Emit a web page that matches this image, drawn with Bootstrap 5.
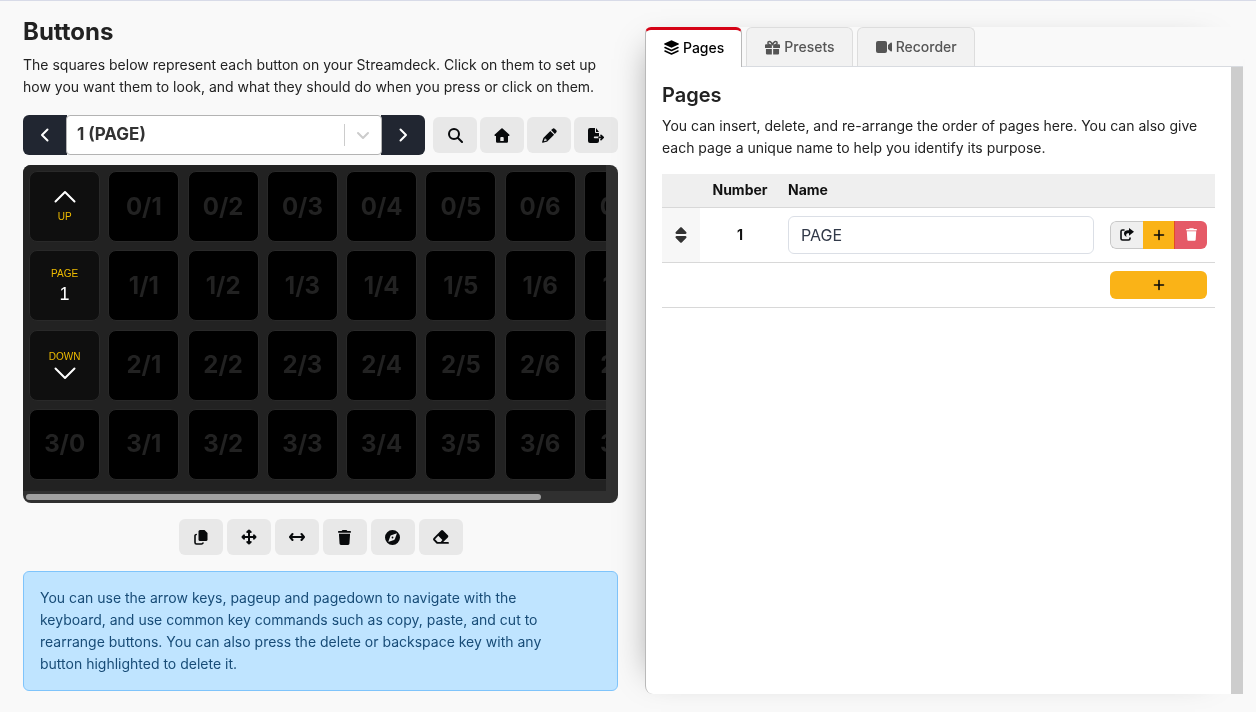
<!DOCTYPE html>
<html lang="en">
<head>
<meta charset="utf-8">
<meta name="viewport" content="width=device-width, initial-scale=1">
<title>Buttons</title>
<link href="https://cdn.jsdelivr.net/npm/bootstrap@5.3.0/dist/css/bootstrap.min.css" rel="stylesheet">
<style>
body { background: #f9f9f9; color: #222; font-family: Inter, "Liberation Sans", sans-serif; font-size: 14px; line-height: 22px; }
main { border-top: 1px solid #d8dbe8; }
p { margin: 0; }
svg { display: block; fill: currentColor; }
.ln { fill: none; stroke: currentColor; stroke-width: 2; stroke-linecap: round; stroke-linejoin: round; }
.ln-thin { stroke-width: 1.6; }
.left-side { padding: 16px 10px 21px 23px; }
.right-side { padding: 26px 13px 18px 17px; }
h1 { font-size: 24px; font-weight: 700; line-height: 30px; margin: 0 0 7px; }
h2 { font-size: 20px; font-weight: 600; line-height: 26px; margin: 0 0 7px; }
.head-tools { margin-top: 17px; }
.pager { width: 402px; height: 40px; }
.btn-page { width: 44px; background: #212631; color: #fff; padding: 0; }
.btn-page:hover { background: #323a49; color: #fff; }
.pick { position: relative; border: 1px solid #b3b3b3; border-radius: 4px; background: #fff; margin: 0 -1px; }
.pick select { appearance: none; border: 0; background: none; width: 100%; height: 100%; padding: 0 50px 2px 10px; font-size: 17px; font-weight: 700; color: #333; }
.pick .deco { position: absolute; top: 0; bottom: 0; right: 0; width: 37px; pointer-events: none; color: #ccc; }
.deco::before { content: ""; position: absolute; left: 0; top: 8px; bottom: 8px; width: 1px; background: #ccc; }
.tool { width: 44px; height: 36px; padding: 0; background: #e8e8e8; color: #080a0c; border: 0; border-radius: 6px; }
.tool:hover { background: #ddd; }
.tools-top { gap: 3px; }
.deck { margin-top: 10px; background: #303030; border-radius: 8px; overflow: hidden; padding: 0 12px 0 0; }
.deck-view { background: #222; overflow: auto; scrollbar-width: none; height: 326px; padding: 2px; }
.deck-view::-webkit-scrollbar { display: none; }
.deck-grid { display: grid; grid-template-columns: repeat(8, 1fr); grid-template-rows: repeat(4, 1fr); width: 634px; height: 317px; place-items: center; }
.key { width: 71px; height: 71px; padding: 0; background: #000; border: 1px solid #292929; border-radius: 8px; color: #222; font-size: 24px; font-weight: 700; line-height: 30px; }
.key-nav { background: #0f0f0f; color: #fff; font: 18px/20px "Liberation Sans", Arial, sans-serif; }
.key-nav span { color: #eebb00; font-size: 10px; line-height: 12px; }
.deck-bar { height: 12px; padding: 3px 0 3px 3px; }
.deck-thumb { width: 515px; height: 6px; border-radius: 3px; background: #a0a0a0; }
.hint { margin-top: 16px; padding: 15px 48px 15px 16px; background: #bfe4ff; border: 1px solid #7fc4fb; border-radius: 6px; color: #184c77; }
.side-panel { box-shadow: -16px 0 32px -21px rgba(0,0,0,.36); border-radius: 8px; }
.tabs { gap: 4px; height: 40px; border-bottom: 1px solid #d8dbe0; }
.tab { height: 39px; padding: 0 17px 0 18px; gap: 4px; display: flex; align-items: center; background: #f2f2f2; border: 1px solid #ddd; border-bottom: 0; border-radius: 6px 6px 0 0; color: #555; font-weight: 500; text-decoration: none; }
.tab.current { height: 40px; margin-bottom: -1px; padding-bottom: 2px; border: 1px solid #b9b9b9; border-top: 3px solid #d50215; border-bottom: 0; background: #fff; color: #000; }
.pane { background: #fff; border-left: 1px solid #b9b9b9; border-radius: 0 0 0 8px; overflow: hidden; }
.pane-body { padding: 15px 16px; min-width: 0; }
.pane-track { width: 12px; background: #cdcdcd; flex: none; }
.pages { width: 100%; margin-top: 15px; color: #111; }
.pages th { font-weight: 700; }
.pages th, .pages td { padding: 8px; }
.pages thead th { background: #efefef; height: 33px; padding: 0 8px; }
.pages tr { border-bottom: 1px solid #d8d8d8; }
.pages .grip { width: 38px; background: #f7f7f7; color: #333; padding: 0; }
.pages .num { width: 80px; text-align: center; }
.pages .acts { width: 113px; }
.pages input { height: 38px; padding: 0 12px; border: 1px solid #dbdfe6; border-radius: 6px; font-size: 16px; color: #323a49; }
.act { height: 28px; padding: 0; flex: 1; color: #080a0c; border: 0; }
.act-share { background: #efefef; border: 1px solid #c8c8c8; border-right: 0; }
.act-add, .act-add:hover { background: #fab317; }
.act-del { background: #e55a67; border-left: 1px solid #e34a28; color: #fff; }
</style>
</head>
<body>
<svg class="d-none" aria-hidden="true">
  <symbol id="i-trash" viewBox="0 0 448 512"><path d="M135.200 17.700L128 32H32C14.300 32 0 46.300 0 64S14.300 96 32 96H416c17.700 0 32-14.300 32-32s-14.300-32-32-32H320l-7.200-14.300C307.400 6.800 296.300 0 284.200 0H163.800c-12.100 0-23.200 6.800-28.600 17.700zM416 128H32L53.200 467c1.600 25.300 22.600 45 47.900 45H346.900c25.300 0 46.300-19.700 47.900-45L416 128z"/></symbol>
  <symbol id="i-plus" viewBox="0 0 16 16"><path class="ln ln-thin" d="M8 3.500v9M3.500 8h9"/></symbol>
</svg>
<main class="row g-0 min-vh-100">
  <section class="col-6 left-side">
    <h1>Buttons</h1>
    <p>The squares below represent each button on your Streamdeck. Click on them to set up how you want them to look, and what they should do when you press or click on them.</p>
    <div class="d-flex justify-content-between align-items-center head-tools">
      <div class="pager d-flex">
        <button class="btn btn-page rounded-end-0 d-flex align-items-center justify-content-center" type="button" aria-label="Previous page"><svg width="16" height="16" viewBox="0 0 16 16"><path class="ln" d="M10.500 2.500L5 8l5.500 5.500"/></svg></button>
        <div class="pick flex-grow-1">
          <select aria-label="Page"><option>1 (PAGE)</option></select>
          <span class="deco d-flex align-items-center justify-content-center"><svg width="14" height="14" viewBox="0 0 14 14"><path class="ln" d="M2 5l5 5 5-5"/></svg></span>
        </div>
        <button class="btn btn-page rounded-start-0 d-flex align-items-center justify-content-center" type="button" aria-label="Next page"><svg width="16" height="16" viewBox="0 0 16 16"><path class="ln" d="M5.500 2.500L11 8l-5.500 5.500"/></svg></button>
      </div>
      <div class="tools-top d-flex">
        <button class="btn tool d-flex align-items-center justify-content-center" type="button" aria-label="Zoom"><svg width="15" height="15" viewBox="0 0 15 15"><circle class="ln" cx="6" cy="6" r="5"/><path class="ln" d="M10 10l4 4"/></svg></button>
        <button class="btn tool d-flex align-items-center justify-content-center" type="button" aria-label="Home"><svg width="16" height="15" viewBox="0 0 16 15"><path fill-rule="evenodd" d="M7.400.400a1 1 0 0 1 1.200 0l6.600 6c.700.700.300 1.600-.500 1.600H14v5.500a1.200 1.200 0 0 1-1.200 1.200H3.200A1.200 1.200 0 0 1 2 13.500V8h-.700C.400 8 .100 7 .800 6.400zM6.300 13h3.400V9.800c0-.500-.400-.900-.900-.900H7.200c-.500 0-.900.400-.900.900z"/></svg></button>
        <button class="btn tool d-flex align-items-center justify-content-center" type="button" aria-label="Edit"><svg width="15" height="15" viewBox="0 0 15 15"><path d="M10.400.900a1.800 1.800 0 0 1 2.500 0l1.200 1.200a1.800 1.800 0 0 1 0 2.500l-1.200 1.300-3.800-3.800z"/><path fill-rule="evenodd" d="M8.300 2.900l3.800 3.800-6.600 6.500c-.300.300-.600.500-1 .600l-3.700 1a.6.600 0 0 1-.700-.700l1.100-3.600c.100-.400.300-.800.600-1.100zM2.800 10.500l-.9 2.700 2.800-.8V11.400H3.600v-.9z"/></svg></button>
        <button class="btn tool d-flex align-items-center justify-content-center" type="button" aria-label="Export page"><svg width="16" height="15" viewBox="0 0 16 15"><path d="M2 0h5v4a1 1 0 0 0 1 1h3v3.600H6.600a.8.800 0 0 0 0 1.600H11V13a2 2 0 0 1-2 2H2a2 2 0 0 1-2-2V2a2 2 0 0 1 2-2zM8 0l3 4H8z"/><path class="ln ln-thin" d="M11 9.400h4M13 7.300l2.200 2.100-2.200 2.200"/></svg></button>
      </div>
    </div>
    <div class="deck">
      <div class="deck-view"><div class="deck-grid" id="keys"></div></div>
      <div class="deck-bar"><div class="deck-thumb"></div></div>
    </div>
    <div class="d-flex justify-content-center gap-1 mt-3">
      <button class="btn tool d-flex align-items-center justify-content-center" type="button" aria-label="Copy"><svg width="14" height="15" viewBox="0 0 14 15"><path d="M6 0h4.500L13.500 3v6.500A1.500 1.500 0 0 1 12 11H6a1.500 1.500 0 0 1-1.500-1.500v-8A1.500 1.500 0 0 1 6 0z"/><path class="ln ln-thin" d="M2.200 4.500C1.200 4.700 1 5 1 5.500v7c0 1 .5 1.500 1.500 1.500h5c.8 0 1.300-.3 1.500-.9"/></svg></button>
      <button class="btn tool d-flex align-items-center justify-content-center" type="button" aria-label="Move"><svg width="16" height="16" viewBox="0 0 16 16"><path class="ln" d="M8 2v12M2 8h12M6.300 3L8 1.500 9.700 3M6.300 13L8 14.500 9.700 13M3 6.300L1.500 8 3 9.700M13 6.300L14.500 8 13 9.700"/></svg></button>
      <button class="btn tool d-flex align-items-center justify-content-center" type="button" aria-label="Swap"><svg width="16" height="16" viewBox="0 0 16 16"><path class="ln" d="M1 8h14M3.500 5L1 8l2.500 3M12.500 5L15 8l-2.500 3"/></svg></button>
      <button class="btn tool d-flex align-items-center justify-content-center" type="button" aria-label="Delete"><svg width="13" height="15"><use href="#i-trash"/></svg></button>
      <button class="btn tool d-flex align-items-center justify-content-center" type="button" aria-label="Wipe"><svg width="15" height="15" viewBox="0 0 15 15"><path fill-rule="evenodd" d="M7.500 0a7.500 7.500 0 1 1 0 15 7.500 7.500 0 0 1 0-15zM11.400 3.400L6.200 5.300a1.500 1.500 0 0 0-.9.900L3.400 11.400c-.1.300.1.500.4.400L9 9.900a1.500 1.500 0 0 0 .9-.9l1.900-5.200c.1-.300-.1-.500-.4-.400zM7.500 6.600a.9.900 0 1 1 0 1.800.9.900 0 0 1 0-1.800z"/></svg></button>
      <button class="btn tool d-flex align-items-center justify-content-center" type="button" aria-label="Erase"><svg width="16" height="14" viewBox="0 0 16 14"><path fill-rule="evenodd" d="M8 .6a1.500 1.500 0 0 1 2.100 0l4.700 4.700a1.500 1.500 0 0 1 0 2.100L10.200 12H15a.9.900 0 0 1 0 1.800H4.600a2 2 0 0 1-1.400-.6L.6 10.500a2 2 0 0 1 0-2.600zM5.300 5.700L2 9.200l2.700 2.700h3l1.700-1.900z"/></svg></button>
    </div>
    <div class="hint" role="note">You can use the arrow keys, pageup and pagedown to navigate with the keyboard, and use common key commands such as copy, paste, and cut to rearrange buttons. You can also press the delete or backspace key with any button highlighted to delete it.</div>
  </section>
  <section class="col-6 right-side d-flex">
    <div class="side-panel flex-grow-1 d-flex flex-column">
      <nav class="tabs d-flex" aria-label="Panels">
        <a class="tab current" href="#pages" aria-current="page"><svg width="15" height="15" viewBox="0 0 15 15"><path d="M7.500.2L14.600 3.500c.5.200.5.800 0 1L7.500 7.800.4 4.500c-.5-.2-.5-.8 0-1z"/><path class="ln ln-thin" d="M1 7.500l6.500 3L14 7.500M1 11l6.500 3L14 11"/></svg>Pages</a>
        <a class="tab" href="#presets"><svg width="15" height="15" viewBox="0 0 16 15"><path class="ln ln-thin" d="M8 4.500C7 2 6 1 4.700 1 2.500 1 2.500 4.300 4.700 4.300M8 4.500C9 2 10 1 11.300 1c2.200 0 2.200 3.300 0 3.300"/><path d="M1 4h6.300v4H0V5a1 1 0 0 1 1-1zM8.700 4H15a1 1 0 0 1 1 1v3H8.700zM1 9h6.300v6H2.200A1.200 1.200 0 0 1 1 13.800zM8.700 9H15v4.800a1.200 1.200 0 0 1-1.200 1.200H8.700z"/></svg>Presets</a>
        <a class="tab" href="#recorder"><svg width="16" height="12" viewBox="0 0 16 12"><rect width="11" height="12" rx="2"/><path d="M12 4l2.600-2.200c.7-.5 1.400-.2 1.400.5v7.400c0 .7-.7 1-1.400.5L12 8z"/></svg>Recorder</a>
      </nav>
      <div class="pane d-flex flex-grow-1">
        <div class="pane-body flex-grow-1" id="pages">
          <h2>Pages</h2>
          <p>You can insert, delete, and re-arrange the order of pages here. You can also give each page a unique name to help you identify its purpose.</p>
          <table class="pages">
            <thead><tr><th></th><th class="num" scope="col">Number</th><th scope="col">Name</th><th></th></tr></thead>
            <tbody>
              <tr>
                <td class="grip"><svg class="mx-auto" width="12" height="16" viewBox="0 24 320 464"><path d="M137.400 41.400c12.500-12.500 32.800-12.500 45.300 0l128 128c9.200 9.200 11.900 22.900 6.900 34.900s-16.600 19.800-29.600 19.800H32c-12.900 0-24.600-7.800-29.600-19.800s-2.200-25.700 6.900-34.900l128-128zm0 429.300l-128-128c-9.200-9.200-11.900-22.900-6.900-34.900s16.600-19.800 29.600-19.800H288c12.900 0 24.600 7.800 29.600 19.800s2.200 25.700-6.900 34.900l-128 128c-12.500 12.500-32.800 12.500-45.300 0z"/></svg></td>
                <th class="num" scope="row">1</th>
                <td><input class="w-100 d-block" type="text" value="PAGE" aria-label="Page name"></td>
                <td class="acts"><div class="d-flex rounded-2 overflow-hidden">
                  <button class="act act-share rounded-start-2 d-flex align-items-center justify-content-center" type="button" aria-label="Go to page"><svg width="14" height="13" viewBox="0 0 14 13"><path class="ln ln-thin" d="M4 2H2.500C1.500 2 1 2.500 1 3.500v7c0 1 .5 1.500 1.500 1.500h6c1 0 1.500-.500 1.500-1.500V10"/><path d="M9 0l5 3.800-5 3.900V5.300H8C6.300 5.300 5.800 6.700 6.500 9 4.600 7.800 4 6.600 4 5.500 4 3.300 5.700 2.300 8 2.300h1z"/></svg></button>
                  <button class="act act-add d-flex align-items-center justify-content-center" type="button" aria-label="Insert page"><svg width="16" height="16"><use href="#i-plus"/></svg></button>
                  <button class="act act-del d-flex align-items-center justify-content-center" type="button" aria-label="Delete page"><svg width="11" height="13"><use href="#i-trash"/></svg></button>
                </div></td>
              </tr>
              <tr>
                <td colspan="3"></td>
                <td class="acts"><button class="btn act act-add w-100 rounded-2 d-flex align-items-center justify-content-center" type="button" aria-label="Add page"><svg width="16" height="16"><use href="#i-plus"/></svg></button></td>
              </tr>
            </tbody>
          </table>
        </div>
        <div class="pane-track"></div>
      </div>
    </div>
  </section>
</main>
<script>
const nav = {
  '0/0': '<svg class="mx-auto mb-2" width="22" height="13" viewBox="0 0 22 13"><path class="ln" d="M1.500 11.500L11 2l9.500 9.500"/></svg><span class="d-block">UP</span>',
  '1/0': '<span class="d-block mb-1">PAGE</span>1',
  '2/0': '<span class="d-block mb-1">DOWN</span><svg class="mx-auto" width="22" height="13" viewBox="0 0 22 13"><path class="ln" d="M1.500 1.500L11 11l9.500-9.500"/></svg>'
};
let html = '';
for (let r = 0; r < 4; r++) for (let c = 0; c < 8; c++) {
  const id = r + '/' + c;
  html += nav[id] ? `<button type="button" class="key key-nav">${nav[id]}</button>` : `<button type="button" class="key">${id}</button>`;
}
document.getElementById('keys').innerHTML = html;
</script>
<script src="https://cdn.jsdelivr.net/npm/bootstrap@5.3.0/dist/js/bootstrap.bundle.min.js"></script>
</body>
</html>
